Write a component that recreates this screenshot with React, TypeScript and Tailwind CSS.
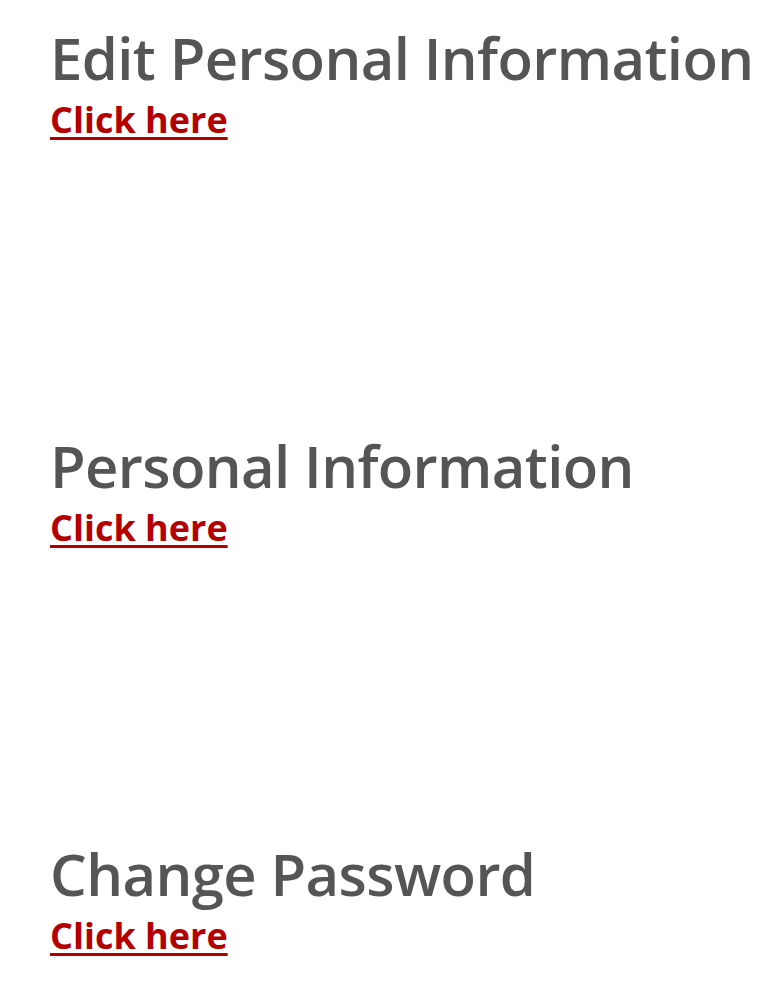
import React from "react";

const sections = ["Edit Personal Information", "Personal Information", "Change Password"];

export default function App() {
  return (
    <div className="h-[984px] overflow-hidden bg-white pl-[50px] pt-[26px]" style={{ fontFamily: '"Open Sans", sans-serif' }}>
      {sections.map((s) => (
        <div key={s} className="h-[408px] last:h-auto">
          <h2 className="text-[58px] leading-[64px] font-semibold text-[#555555] whitespace-nowrap tracking-[-0.6px]">{s}</h2>
          <a href="#" className="block w-fit text-[36px] leading-[60px] font-bold text-[#b30000] underline decoration-[3px] underline-offset-[4px]">
            Click here
          </a>
        </div>
      ))}
    </div>
  );
}
